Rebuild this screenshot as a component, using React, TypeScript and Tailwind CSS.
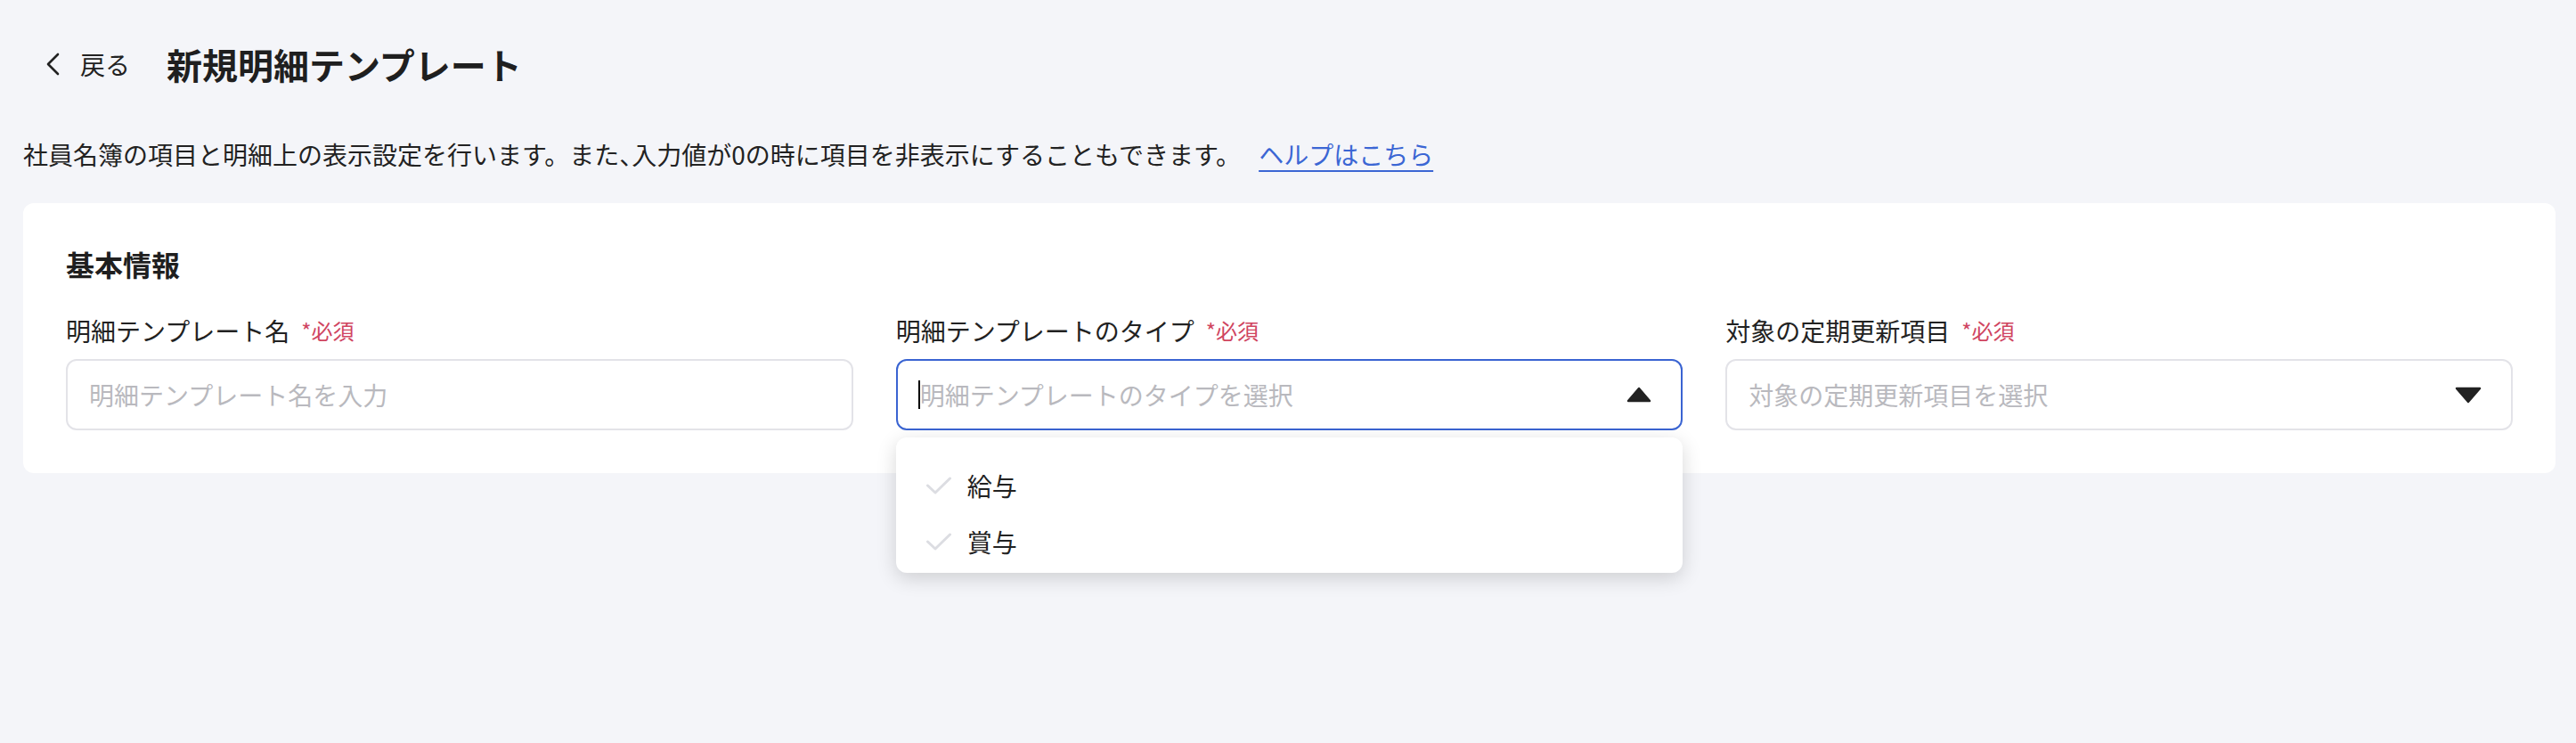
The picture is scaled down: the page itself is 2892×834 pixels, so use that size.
import React from "react";

const FONT = "font-['Noto_Sans_CJK_JP','Noto_Sans',sans-serif]";

function Required() {
  return <span className="ml-[13px] text-[24px] leading-none text-[#d0455f]">*必須</span>;
}

function TriangleUp() {
  return (
    <svg width="28" height="18" viewBox="0 0 28 18" className="block">
      <polygon points="14,2 26,16 2,16" fill="#222" stroke="#222" strokeWidth="2.5" strokeLinejoin="round" />
    </svg>
  );
}

function TriangleDown() {
  return (
    <svg width="30" height="19" viewBox="0 0 30 19" className="block">
      <polygon points="2,2 28,2 15,17" fill="#222" stroke="#222" strokeWidth="2.5" strokeLinejoin="round" />
    </svg>
  );
}

function Check() {
  return (
    <svg width="28" height="20" viewBox="0 0 28 20" className="block">
      <polyline points="1.5,10 10,18 26.5,2" fill="none" stroke="#dcdde2" strokeWidth="3" strokeLinecap="round" strokeLinejoin="round" />
    </svg>
  );
}

function Label({ text }: { text: string }) {
  return (
    <div className="mb-[9px] flex h-[40px] items-center pb-[6px]">
      <span className="text-[28px] leading-none">{text}</span>
      <Required />
    </div>
  );
}

export default function App() {
  return (
    <div className={`min-h-screen bg-[#f4f5f9] pl-[26px] pr-[23px] pt-[32px] text-[#222] ${FONT}`}>
      {/* Header */}
      <div className="flex h-[80px] items-center pl-[24px]">
        <svg width="18" height="26" viewBox="0 0 18 26" className="block">
          <polyline points="15,2 4,13 15,24" fill="none" stroke="#222" strokeWidth="2.6" strokeLinecap="round" strokeLinejoin="round" />
        </svg>
        <span className="ml-[22px] text-[28px] leading-none">戻る</span>
        <h1 className="ml-[41px] text-[40px] font-bold leading-none text-[#1f1f1f]">新規明細テンプレート</h1>
      </div>

      {/* Description */}
      <p className="mt-[41px] h-[40px] text-[28px] leading-[40px]">
        社員名簿の項目と明細上の表示設定を行います。また<span className="[font-feature-settings:'halt']">、</span>入力値が0の時に項目を非表示にすることもできます。
        <a className="ml-[20px] text-[#3b66d4] underline decoration-[2px] underline-offset-[6px]" href="#">
          ヘルプはこちら
        </a>
      </p>

      {/* Card */}
      <div className="mt-[35px] rounded-[12px] bg-white p-[48px]">
        <h2 className="h-[46px] text-[32px] font-bold leading-[40px] text-[#1f1f1f]">基本情報</h2>
        <div className="mt-[32px] grid grid-cols-3 gap-x-[48px]">
          {/* Column 1 */}
          <div>
            <Label text="明細テンプレート名" />
            <input
              className={`h-[80px] w-full rounded-[12px] border-2 border-[#e3e3e8] bg-white pl-[24px] text-[28px] outline-none placeholder:text-[#b9b9be] ${FONT}`}
              placeholder="明細テンプレート名を入力"
            />
          </div>

          {/* Column 2 */}
          <div>
            <Label text="明細テンプレートのタイプ" />
            <div className="relative">
              <div className="flex h-[80px] items-center rounded-[12px] border-2 border-[#3a64d2] bg-white pl-[23px] pr-[33px]">
                <span className="h-[32px] w-[2px] bg-black" />
                <span className="flex-1 text-[28px] leading-none text-[#b9b9be]">明細テンプレートのタイプを選択</span>
                <TriangleUp />
              </div>
              <div className="absolute left-0 right-0 top-[calc(100%+8px)] z-10 rounded-[12px] bg-white pb-[4px] pt-[22px] shadow-[0_6px_22px_rgba(0,0,0,0.16)]">
                <div className="flex h-[63px] items-center pl-[34px]">
                  <Check />
                  <span className="ml-[18px] text-[28px] leading-none">給与</span>
                </div>
                <div className="flex h-[63px] items-center pl-[34px]">
                  <Check />
                  <span className="ml-[18px] text-[28px] leading-none">賞与</span>
                </div>
              </div>
            </div>
          </div>

          {/* Column 3 */}
          <div>
            <Label text="対象の定期更新項目" />
            <div className="flex h-[80px] items-center rounded-[12px] border-2 border-[#e3e3e8] bg-white pl-[24px] pr-[33px]">
              <span className="flex-1 text-[28px] leading-none text-[#b9b9be]">対象の定期更新項目を選択</span>
              <TriangleDown />
            </div>
          </div>
        </div>
      </div>
    </div>
  );
}
